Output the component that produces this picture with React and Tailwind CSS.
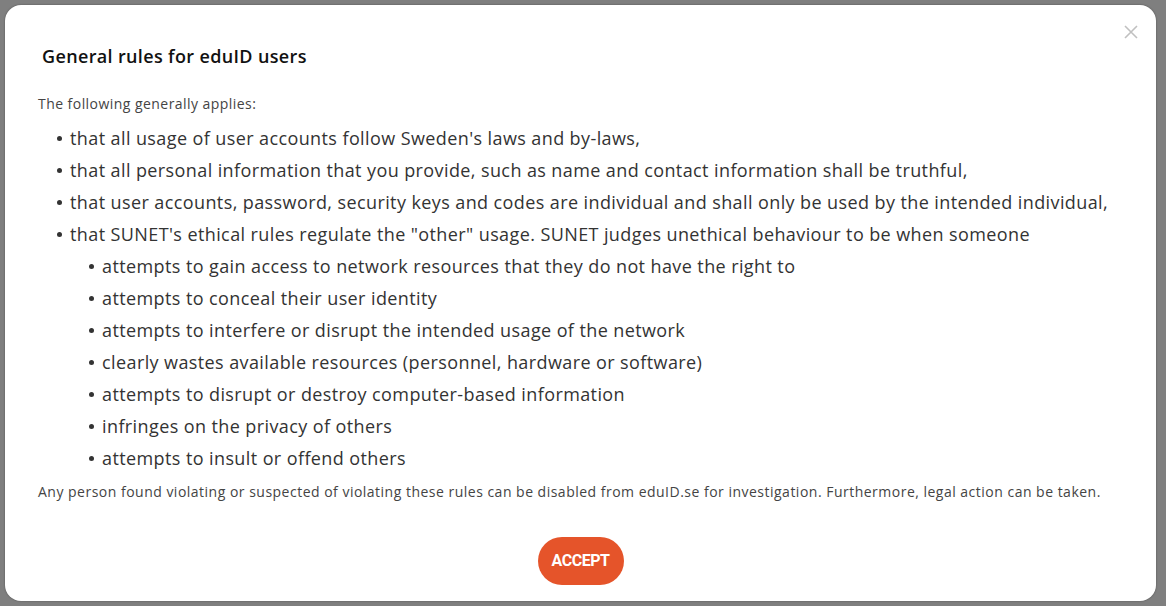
import React from 'react';

const mainRules = [
  "that all usage of user accounts follow Sweden's laws and by-laws,",
  'that all personal information that you provide, such as name and contact information shall be truthful,',
  'that user accounts, password, security keys and codes are individual and shall only be used by the intended individual,',
];

const unethical = [
  'attempts to gain access to network resources that they do not have the right to',
  'attempts to conceal their user identity',
  'attempts to interfere or disrupt the intended usage of the network',
  'clearly wastes available resources (personnel, hardware or software)',
  'attempts to disrupt or destroy computer-based information',
  'infringes on the privacy of others',
  'attempts to insult or offend others',
];

const Bullet = ({ children }) => (
  <li className="flex items-center h-[32px]">
    <span className="w-[5px] h-[5px] rounded-full bg-[#333] mr-[8px] shrink-0" />
    <span>{children}</span>
  </li>
);

export default function App() {
  return (
    <div className="w-[1166px] h-[606px] bg-[#7f7f7f] pt-[5px] pl-[5px] overflow-hidden" style={{ fontFamily: '"Open Sans", Lato, sans-serif' }}>
      <div className="relative w-[1151px] h-[596px] bg-white rounded-[16px] shadow-[0_0_2px_rgba(0,0,0,0.4)] flex flex-col px-[33px]">
        <button className="absolute right-[18px] top-[20px] text-[#c0c0c0]" aria-label="Close">
          <svg width="14" height="14" viewBox="0 0 14 14" stroke="currentColor" strokeWidth="1.6" fill="none">
            <path d="M1 1L13 13M13 1L1 13" />
          </svg>
        </button>
        <h2 className="mt-[40px] ml-[4px] text-[18px] font-semibold text-[#111] leading-[22px] tracking-[0.35px]">General rules for eduID users</h2>
        <p className="mt-[28px] text-[14px] text-[#444] leading-[18px] tracking-[0.45px]">The following generally applies:</p>
        <ul className="mt-[9px] pl-[19px] text-[18px] text-[#333] tracking-[0.4px]">
          {mainRules.map((r) => (
            <Bullet key={r}>{r}</Bullet>
          ))}
          <Bullet>that SUNET's ethical rules regulate the "other" usage. SUNET judges unethical behaviour to be when someone</Bullet>
          <li>
            <ul className="pl-[32px]">
              {unethical.map((r) => (
                <Bullet key={r}>{r}</Bullet>
              ))}
            </ul>
          </li>
        </ul>
        <p className="mt-[9px] text-[14px] text-[#444] leading-[18px] tracking-[0.49px]">
          Any person found violating or suspected of violating these rules can be disabled from eduID.se for investigation. Furthermore, legal action can be taken.
        </p>
        <div className="flex justify-center mt-[36px]">
          <button
            className="w-[86px] h-[48px] rounded-[24px] bg-[#e5542a] text-white text-[16px] font-bold tracking-[-0.5px]"
            style={{ fontFamily: 'Roboto, sans-serif' }}
          >
            ACCEPT
          </button>
        </div>
      </div>
    </div>
  );
}
